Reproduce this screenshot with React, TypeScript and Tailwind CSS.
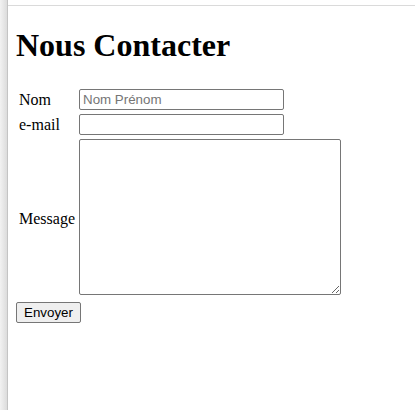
const serif = { fontFamily: '"Liberation Serif", "Times New Roman", serif' };

export default function App() {
  return (
    <div className="flex min-h-[410px] w-full bg-white text-black" style={serif}>
      {/* left edge of the window */}
      <div className="w-[8px] shrink-0 bg-gradient-to-r from-[#f2f2f2] to-[#dcdcdc] border-r border-[#c4c4c4]" />

      <div className="flex-1">
        <div className="h-[5px]" />
        <div className="border-t border-[#dadada] px-[8px]">
          <h1 className="mt-[21px] text-[32px] font-bold leading-[37px]">Nous Contacter</h1>

          <form onSubmit={(e) => e.preventDefault()}>
            <div className="mt-[25px] grid grid-cols-[63px_auto] gap-y-[4px] items-center text-[16px] leading-[18px]">
              <label className="pl-[3px]">Nom</label>
              <input
                type="text"
                placeholder="Nom Prénom"
                className="h-[21px] w-[205px] rounded-[2px] border border-[#767676] px-[3px] text-[13.33px] placeholder:text-[#757575] outline-none"
                style={{ fontFamily: '"Liberation Sans", Arial, sans-serif' }}
              />

              <label className="pl-[3px]">e-mail</label>
              <input
                type="email"
                className="h-[21px] w-[205px] rounded-[2px] border border-[#767676] px-[3px] text-[13.33px] outline-none"
                style={{ fontFamily: '"Liberation Sans", Arial, sans-serif' }}
              />

              <label className="pl-[3px] pt-[4px]">Message</label>
              <textarea
                className="block h-[156px] w-[262px] rounded-[2px] border border-[#767676] px-[2px] text-[13.33px] outline-none"
                style={{ fontFamily: '"Liberation Mono", monospace' }}
              />
            </div>

            <button
              type="submit"
              className="mt-[7px] h-[21px] w-[65px] rounded-[2px] border border-[#767676] bg-[#efefef] text-[13.33px] leading-[16px] text-black"
              style={{ fontFamily: '"Liberation Sans", Arial, sans-serif' }}
            >
              Envoyer
            </button>
          </form>
        </div>
      </div>
    </div>
  );
}
